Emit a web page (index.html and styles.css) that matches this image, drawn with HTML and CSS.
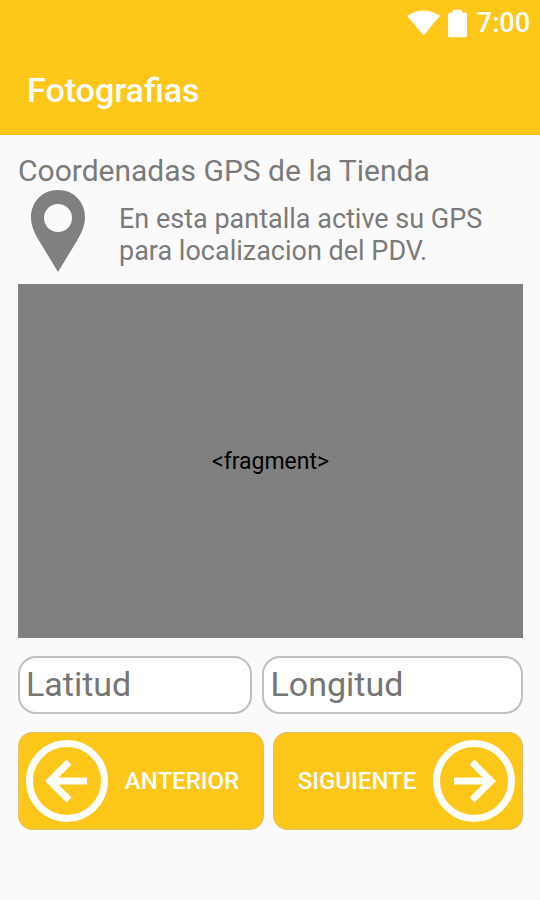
FILE: index.html
```html
<!DOCTYPE html>
<html lang="es">
<head>
<meta charset="utf-8">
<meta name="viewport" content="width=device-width, initial-scale=1">
<title>Fotografias</title>
<link rel="stylesheet" href="styles.css">
</head>
<body>
<header class="top">
  <div class="status">
    <svg class="wifi" viewBox="0 0 34 26" aria-hidden="true"><path d="M0 5.500Q17-5.500 34 5.500L17 26Z"/></svg>
    <svg class="battery" viewBox="0 0 20 29" aria-hidden="true"><path d="M5 3V0h10v3h3q2 0 2 2v22q0 2-2 2H2q-2 0-2-2V5q0-2 2-2Z"/></svg>
    <span class="clock">7:00</span>
  </div>
  <h1 class="title">Fotografias</h1>
</header>
<main class="content">
  <h2 class="heading">Coordenadas GPS de la Tienda</h2>
  <div class="intro">
    <svg class="pin" viewBox="0 0 56 82" aria-hidden="true"><path fill-rule="evenodd" d="M28 0C12 0 1 12 1 27.500C1 35 4 42 8 49L28 82L48 49C52 42 55 35 55 27.500C55 12 44 0 28 0ZM28 14a14 14 0 1 1 0 28a14 14 0 1 1 0-28Z"/></svg>
    <p class="hint">En esta pantalla active su GPS<br>para localizacion del PDV.</p>
  </div>
  <div class="map">&lt;fragment&gt;</div>
  <div class="fields">
    <input class="field" type="text" placeholder="Latitud" aria-label="Latitud">
    <input class="field field-wide" type="text" placeholder="Longitud" aria-label="Longitud">
  </div>
  <div class="actions">
    <button class="action" type="button">
      <svg class="arrow" viewBox="0 0 82 82" aria-hidden="true"><circle cx="41" cy="41" r="37.500"/><path d="M61 41H25M43 22L24 41L43 60"/></svg>
      <span class="label">ANTERIOR</span>
    </button>
    <button class="action action-wide" type="button">
      <span class="label">SIGUIENTE</span>
      <svg class="arrow" viewBox="0 0 82 82" aria-hidden="true"><circle cx="41" cy="41" r="37.500"/><path d="M21 41H57M39 22L58 41L39 60"/></svg>
    </button>
  </div>
</main>
</body>
</html>
```
FILE: styles.css
```css
* {
  box-sizing: border-box;
}

body {
  margin: 0;
  background: #fafafa;
  color: #7a7a7a;
  font-family: Roboto, "Liberation Sans", sans-serif;
}

.top {
  background: #fcc719;
  color: #fff;
  border-bottom: 1px solid #f0bb14;
}

.status {
  display: flex;
  align-items: center;
  justify-content: flex-end;
  gap: 8px;
  height: 46px;
  padding-right: 10px;
}

.wifi,
.battery {
  fill: #fff;
}

.wifi {
  width: 33px;
  height: 26px;
}

.battery {
  width: 19px;
  height: 29px;
}

.clock {
  padding-left: 2px;
  font-size: 27px;
  font-weight: 500;
}

.title {
  margin: 0;
  padding: 0 27px;
  font-size: 34px;
  font-weight: 500;
  line-height: 88px;
}

.content {
  padding: 18px 17px 18px 18px;
}

.heading {
  margin: 0;
  font-size: 30px;
  font-weight: 400;
  line-height: 36px;
}

.intro {
  display: flex;
  align-items: center;
  gap: 33px;
  padding: 1px 12px 12px;
}

.pin {
  flex: none;
  width: 56px;
  height: 82px;
  fill: #808080;
}

.hint {
  margin: 0;
  padding-top: 8px;
  font-size: 27px;
  line-height: 32px;
}

.map {
  display: flex;
  align-items: center;
  justify-content: center;
  height: 354px;
  background: #808080;
  color: #000;
  font-size: 23px;
}

.fields {
  display: grid;
  grid-template-columns: 9fr 10fr;
  gap: 10px;
  margin: 18px 0;
}

.field {
  width: 100%;
  min-width: 0;
  height: 58px;
  padding: 0 6px 2px;
  border: 2px solid #c0c0c0;
  border-radius: 18px;
  background: #fff;
  color: #757575;
  font: 400 34px Roboto, "Liberation Sans", sans-serif;
}

.field::placeholder {
  color: #757575;
  opacity: 1;
}

.actions {
  display: grid;
  grid-template-columns: 62fr 63fr;
  gap: 9px;
}

.action {
  display: flex;
  align-items: center;
  height: 98px;
  padding: 0 7px;
  border: 1px solid #d8c070;
  border-radius: 14px;
  background: #fcc719;
  color: #fff;
  font: 500 24px Roboto, "Liberation Sans", sans-serif;
}

.label {
  flex: 1;
  text-align: center;
}

.arrow {
  flex: none;
  width: 82px;
  height: 82px;
  fill: none;
  stroke: #fff;
  stroke-width: 7;
}
```
